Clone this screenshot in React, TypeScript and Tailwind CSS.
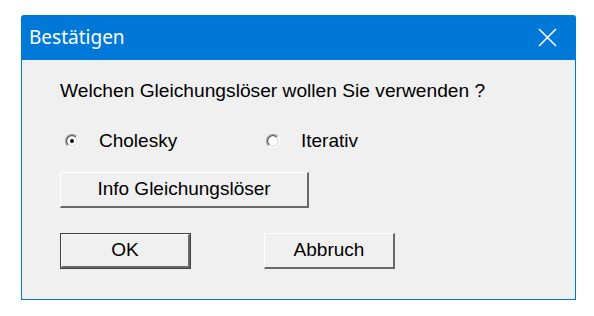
import React from "react";

function Radio({ checked }: { checked?: boolean }) {
  return (
    <svg width="14" height="14" viewBox="0 0 14 14" className="shrink-0">
      <circle cx="7" cy="7" r="6.5" fill="#e3e3e3" />
      <path d="M2.4 11.6 A6.5 6.5 0 0 1 11.6 2.4" fill="none" stroke="#a0a0a0" strokeWidth="1.2" />
      <path d="M3.2 10.8 A5.3 5.3 0 0 1 10.8 3.2" fill="none" stroke="#5a5a5a" strokeWidth="1.2" />
      <path d="M11.6 2.4 A6.5 6.5 0 0 1 2.4 11.6" fill="none" stroke="#ffffff" strokeWidth="1.2" />
      <circle cx="7" cy="7" r="4.4" fill="#ffffff" />
      {checked && <circle cx="7" cy="7" r="2" fill="#000000" />}
    </svg>
  );
}

function Btn({ label, width, isDefault }: { label: string; width: string; isDefault?: boolean }) {
  return (
    <button
      className={`${width} h-[36px] bg-[#f0f0f0] ${
        isDefault ? "border border-[#404040]" : ""
      }`}
    >
      <div className="flex h-full w-full items-center justify-center border-t border-l border-white border-r-2 border-b-2 border-r-[#696969] border-b-[#696969] text-[19px] text-black">
        {label}
      </div>
    </button>
  );
}

export default function App() {
  return (
    <div className="h-[316px] w-[594px] bg-white pl-[21px] pt-[15px] font-['Liberation_Sans',Arial,sans-serif]">
      <div className="flex h-[285px] w-[555px] flex-col">
        <div className="flex h-[45px] items-center justify-between rounded-t-[3px] bg-[#0078d7] pl-[8px] pr-[19px]">
          <span className="font-['Noto_Sans',sans-serif] text-[19px] text-white">Bestätigen</span>
          <svg width="19" height="19" viewBox="0 0 19 19">
            <path d="M1 1 L18 18 M18 1 L1 18" stroke="#ffffff" strokeWidth="1.6" fill="none" />
          </svg>
        </div>
        <div className="flex flex-1 flex-col border-x border-b border-[#0078d7] bg-[#f0f0f0] pl-[38px]">
          <div className="mt-[20px] text-[19.2px] leading-[22px] text-black">
            Welchen Gleichungslöser wollen Sie verwenden ?
          </div>
          <div className="mt-[28px] flex h-[22px] items-center text-[19px] text-black">
            <div className="flex w-[206px] items-center">
              <span className="ml-[5px]"><Radio checked /></span>
              <span className="ml-[20px]">Cholesky</span>
            </div>
            <div className="flex items-center">
              <Radio />
              <span className="ml-[21px]">Iterativ</span>
            </div>
          </div>
          <div className="mt-[20px]">
            <Btn label="Info Gleichungslöser" width="w-[249px]" />
          </div>
          <div className="mt-[25px] flex gap-[73px]">
            <Btn label="OK" width="w-[131px]" isDefault />
            <Btn label="Abbruch" width="w-[131px]" />
          </div>
        </div>
      </div>
    </div>
  );
}
